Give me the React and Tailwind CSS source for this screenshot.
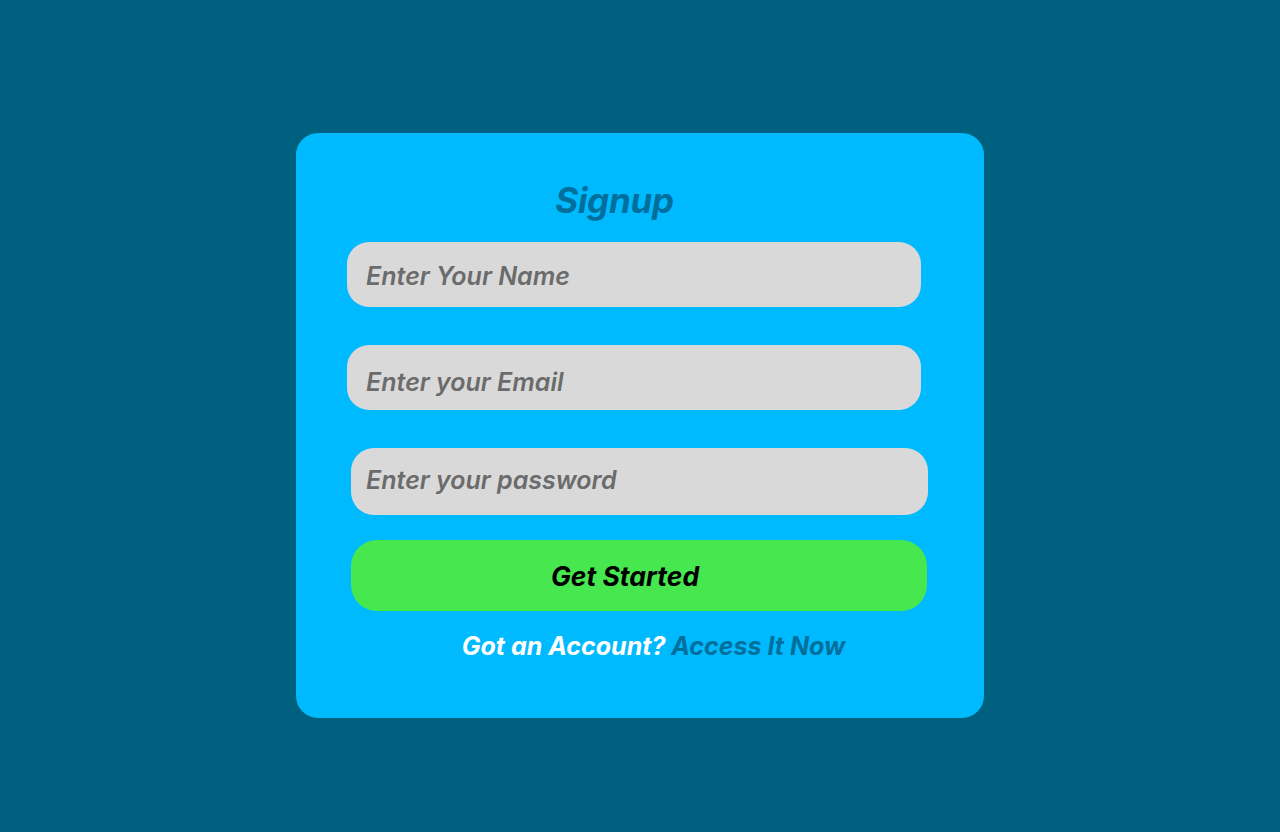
export default function App() {
  const font = { fontFamily: 'Inter, "Noto Sans", sans-serif' };
  return (
    <div className="min-h-screen w-full bg-[#006080] flex justify-center pt-[133px]" style={font}>
      <div className="w-[688px] h-[585px] bg-[#00baff] rounded-[22px] flex flex-col pt-[47px]">
        <h1 className="text-center pr-[51px] text-[35px] leading-[40px] font-bold italic text-[#006f9c] tracking-[-0.3px]">
          Signup
        </h1>
        <input
          type="text"
          placeholder="Enter Your Name"
          className="mt-[22px] ml-[51px] w-[574px] h-[65px] rounded-[22px] bg-[#d9d9d9] pl-[19px] pt-[3px] text-[25px] font-semibold italic text-[#6b6b6b] placeholder:text-[#6b6b6b] outline-none"
        />
        <input
          type="text"
          placeholder="Enter your Email"
          className="mt-[38px] ml-[51px] w-[574px] h-[65px] rounded-[22px] bg-[#d9d9d9] pl-[19px] pt-[8px] text-[25px] font-semibold italic text-[#6b6b6b] placeholder:text-[#6b6b6b] outline-none"
        />
        <input
          type="password"
          placeholder="Enter your password"
          className="mt-[38px] ml-[55px] w-[577px] h-[67px] rounded-[23px] bg-[#d9d9d9] pl-[15px] pb-[4px] text-[25px] font-semibold italic text-[#6b6b6b] placeholder:text-[#6b6b6b] outline-none"
        />
        <button className="mt-[25px] ml-[55px] w-[576px] h-[71px] rounded-[26px] bg-[#47e74f] pr-[28px] pt-[3px] text-[26.5px] font-bold italic text-black">
          Get Started
        </button>
        <p className="mt-[20px] text-center pl-[27px] text-[25px] leading-[30px] font-bold italic text-white">
          Got an Account? <span className="text-[#006f9c]">Access It Now</span>
        </p>
      </div>
    </div>
  );
}
